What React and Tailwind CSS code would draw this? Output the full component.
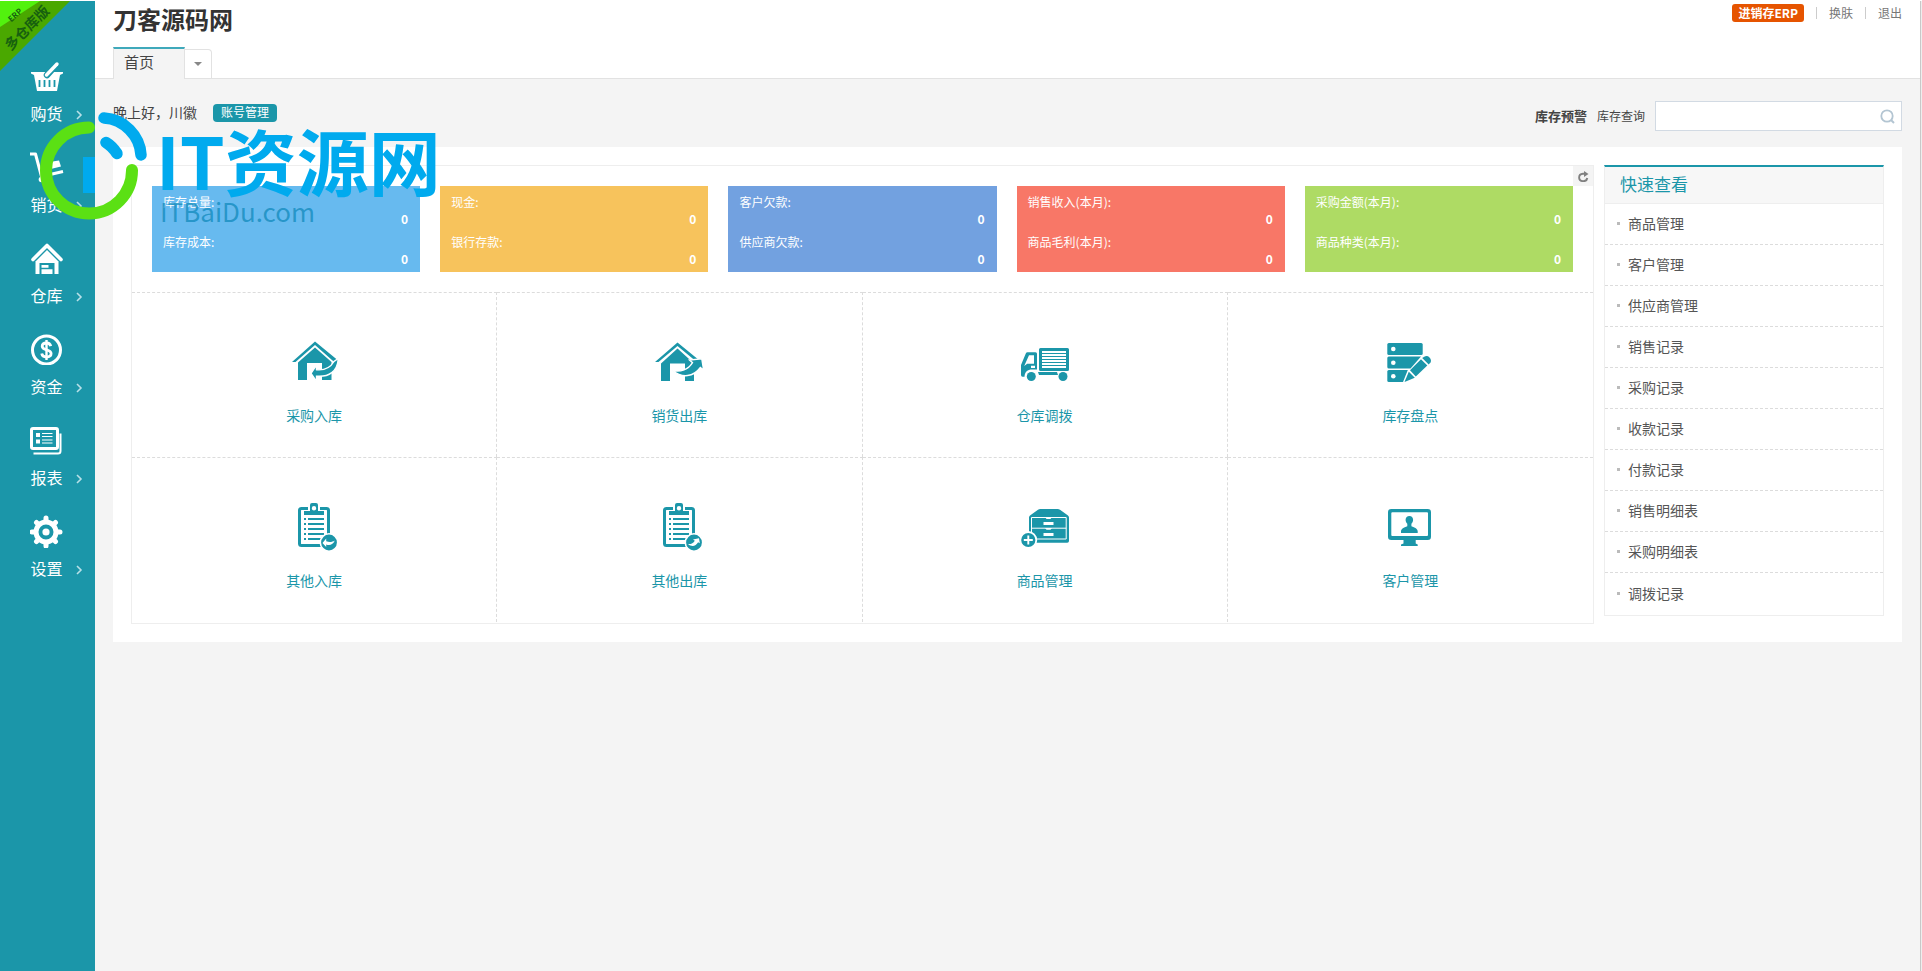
import React from "react";

const TEAL = "#1b96a9";

/* ---------- sidebar icons ---------- */

const BasketIcon = () => (
  <svg width="34" height="32" viewBox="0 0 34 32" aria-hidden="true">
    <path d="M1 12h32v1.500l-3 1.500-3 16H7L4 15l-3-1.500z" fill="#fff" />
    <path d="M9.500 20v7M14.500 20v7M19.500 20v7M24.500 20v7" stroke={TEAL} strokeWidth="1.800" />
    <path d="M27 4 17 15" stroke={TEAL} strokeWidth="6.500" strokeLinecap="round" />
    <path d="M27 4 16.500 15" stroke="#fff" strokeWidth="3.400" strokeLinecap="round" />
  </svg>
);

const CartIcon = () => (
  <svg width="34" height="32" viewBox="0 0 34 32" aria-hidden="true" fill="none" stroke="#fff">
    <path d="M0 3h5.500l6 22.500L33 20.500" strokeWidth="3" strokeLinejoin="round" />
    <path d="M12.500 12 29 9.500l2 6-16.500 4z" fill="#fff" stroke="none" />
    <circle cx="11.500" cy="28.500" r="2.800" fill="#fff" stroke="none" />
  </svg>
);

const StoreIcon = () => (
  <svg width="34" height="32" viewBox="0 0 34 32" aria-hidden="true">
    <path d="M3 17.500 17 3.500l14 14" fill="none" stroke="#fff" strokeWidth="3.600" strokeLinecap="round" strokeLinejoin="round" />
    <path d="M5.500 19.500 17 8l11.500 11.500V32h-23z" fill="#fff" />
    <path d="M9.500 21h15v11h-15z" fill={TEAL} />
    <path d="M11.500 23h7v2.800h-7zM11.500 27.200h11V32h-11z" fill="#fff" />
  </svg>
);

const MoneyIcon = () => (
  <svg width="34" height="32" viewBox="0 0 34 32" aria-hidden="true" fill="none" stroke="#fff">
    <circle cx="16.500" cy="17" r="14" strokeWidth="3" />
    <path d="M20.800 13.200c-.5-2-2.200-3.200-4.400-3.200-2.500 0-4.200 1.300-4.200 3.300 0 4.700 8.900 2.300 8.900 7.300 0 2.100-2 3.400-4.700 3.400-2.500 0-4.300-1.300-4.700-3.500" strokeWidth="2.800" />
    <path d="M16.500 7v20" strokeWidth="2.400" />
  </svg>
);

const ReportIcon = () => (
  <svg width="34" height="32" viewBox="0 0 34 32" aria-hidden="true" fill="none" stroke="#fff">
    <rect x="1.500" y="4.500" width="26" height="20" rx="1.500" strokeWidth="3" />
    <path d="M3.500 29.500h24.500c1.500 0 2.500-1 2.500-2.500V9.500" strokeWidth="2" />
    <path d="M6 9h4v4H6zM6 15.500h4v4H6z" fill="#fff" stroke="none" />
    <path d="M12 9.500h10.500M12 12.500h10.500M12 16h10.500M12 19h10.500" strokeWidth="1.200" />
  </svg>
);

const GearIcon = () => (
  <svg width="34" height="34" viewBox="0 0 34 34" aria-hidden="true" fill="none" stroke="#fff">
    <circle cx="16" cy="18" r="10" strokeWidth="5" />
    <path
      d="M16 6V4M16 32v-2M4 18H2M30 18h-2M7.500 9.500 6.500 8.500M25.500 27.500l-1-1M24.500 9.500l1-1M6.500 27.500l1-1"
      strokeWidth="5"
      strokeLinecap="round"
    />
    <circle cx="16" cy="18" r="3.600" fill="#fff" stroke="none" />
  </svg>
);

/* ---------- tile icons ---------- */

const Tile = ({ children }) => (
  <svg width="48" height="48" viewBox="0 0 48 48" aria-hidden="true" fill={TEAL}>
    {children}
  </svg>
);

const StockInIcon = () => (
  <Tile>
    <path d="M2 24h3.500L25 7 42.500 22.500l2 1L47.500 22 25 3.500z" />
    <path d="M8 24.500 25 9.500l16.500 14.500V42H32V25H17v17H8z" />
    <path
      d="M21 35.300 26.500 27v4.700c8 .8 14-2.200 17.500-8.200l4.300-3C47.500 33.500 39 39.200 26.500 38.200v5.300z"
      stroke="#fff"
      strokeWidth="1.400"
    />
  </Tile>
);

const StockOutIcon = () => (
  <Tile>
    <path d="M0 24h3.500L22.500 8 40 22.500h4.500L22.500 4.500z" />
    <path d="M6 25.500 22.500 10.500 39 25.500V43h-9V25.500H15V43H6z" />
    <path
      d="M17.500 32.500c8 2 16-1 20-7.800l-3-2.700 12.300-1.200 1.900 11.600-3.300-2.900c-7 9.500-18 11-27.900 3z"
      stroke="#fff"
      strokeWidth="1.400"
    />
  </Tile>
);

const TruckIcon = () => (
  <Tile>
    <path fillRule="evenodd" d="M19.500 10h27q1.500 0 1.500 1.500v20q0 1.500-1.500 1.500h-27q-1.500 0-1.500-1.500v-20Q18 10 19.500 10zM21 13v17h24V13z" />
    <path d="M21 15.500h24M21 18.500h24M21 21.500h24M21 24.500h24M21 27.500h24" stroke={TEAL} strokeWidth="1" />
    <path
      fillRule="evenodd"
      d="M0 27 4.800 15.500Q5.300 14.300 6.500 14.300H14.500Q16 14.300 16 15.800V31.500H11C6.500 31.500 3.800 34 3.500 38.700H1.500Q0 38.500 0 37zM8 17.300 3.200 28l3-2.300H13v-8.400zM10 27.700V30h4v-2.300z"
    />
    <path d="M17 34h19l1 3H18z" />
    <circle cx="10.300" cy="38.500" r="4.500" />
    <circle cx="42" cy="38.500" r="4.500" />
  </Tile>
);

const StocktakeIcon = () => (
  <Tile>
    <rect x="1.300" y="5" width="35.400" height="12" rx="1.500" />
    <path d="M2.800 18.500H35L24.500 30.500H2.800q-1.500 0-1.500-1.500v-9q0-1.500 1.500-1.500z" />
    <path d="M2.800 32h19L17 44H2.800q-1.500 0-1.500-1.500v-9Q1.300 32 2.800 32z" />
    <g fill="#fff">
      <circle cx="7.300" cy="11" r="2.300" />
      <circle cx="7.300" cy="24.700" r="2.300" />
      <circle cx="7.300" cy="38.200" r="2.300" />
    </g>
    <path d="m24 32.300 11-11 6.300 6.300-11.500 11z" />
    <path d="m22.800 33.700 6 6L18.500 44z" />
    <path d="m36.200 20 2-1.300q3-1.500 5.300.8t1 5l-1.800 2z" />
  </Tile>
);

const Clipboard = ({ children }) => (
  <Tile>
    <rect x="9.500" y="5.500" width="29" height="37" rx="2" fill="none" stroke={TEAL} strokeWidth="3" />
    <path d="M18 3h12v5H18z" fill="#fff" />
    <path fillRule="evenodd" d="M22 0h4q2 0 2 2v6h6v4H14V8h6V2q0-2 2-2zM24 3a2.200 2.200 0 1 0 0 4.400A2.200 2.200 0 0 0 24 3z" />
    <path d="M14 16h2M18 16h16M14 21h2M18 21h16M14 26h2M18 26h16M14 31h2M18 31h16M14 36h2M18 36h16" stroke={TEAL} strokeWidth="2" />
    <circle cx="39" cy="39.500" r="8.700" stroke="#fff" strokeWidth="1.600" />
    {children}
  </Tile>
);

const OtherInIcon = () => (
  <Clipboard>
    <path d="m32.500 40 3.700-4.500v2.700c3 1.300 6 1 8.600-.7-1.600 4-5 5.300-8.600 3.900V44z" fill="#fff" />
  </Clipboard>
);

const OtherOutIcon = () => (
  <Clipboard>
    <path d="M33 41c3.200.2 5.300-.7 6.800-3.300L38 36.500l6-1.300.8 5-1.700-.9c-2.300 4-6.300 5-10.100 1.700z" fill="#fff" />
  </Clipboard>
);

const GoodsIcon = () => (
  <Tile>
    <path d="M8 14.500q0-1.200 1-2l8-5.700Q18 6 19.300 6h17.400q1.300 0 2.300.8l8 5.700q1 .8 1 2V38q0 1.800-1.800 1.800H9.800Q8 39.800 8 38z" />
    <path d="M10.500 14.500h34.700V36H10.500zM10.500 25.200h34.700" fill="none" stroke="#fff" strokeWidth="1" />
    <path d="M22.500 19h10v3h-10zM22.500 30h10v3h-10zM24 14h7l-1.500 2h-4zM24 25h7l-1.500 1.800h-4z" fill="#fff" />
    <circle cx="7.300" cy="37" r="8" stroke="#fff" strokeWidth="1.800" />
    <path d="M7.300 32.500v9M2.800 37h9" stroke="#fff" strokeWidth="1.900" />
  </Tile>
);

const CustomerIcon = () => (
  <Tile>
    <path
      fillRule="evenodd"
      d="M5.300 6h36.400Q45 6 45 9.300v24.400Q45 37 41.700 37H5.300Q2 37 2 33.700V9.300Q2 6 5.300 6zM6.300 9.300q-1 0-1 1V32q0 1 1 1h34.700q1 0 1-1V10.300q0-1-1-1z"
    />
    <path d="M17.500 37h12.200v3.500l2 1V43H15v-1.500l2.500-1z" />
    <path d="M23.400 13c2.200 0 3.700 1.500 3.700 3.700 0 1.600-.8 3-1.700 4v2.600c3.500 1.200 6.300 2.700 6.300 5V30H15v-1.700c0-2.300 2.800-3.800 6.300-5v-2.600c-1-1-1.700-2.400-1.700-4 0-2.200 1.600-3.700 3.800-3.700z" />
  </Tile>
);

/* ---------- data ---------- */

const NAV = [
  { label: "购货", Icon: BasketIcon },
  { label: "销货", Icon: CartIcon },
  { label: "仓库", Icon: StoreIcon },
  { label: "资金", Icon: MoneyIcon },
  { label: "报表", Icon: ReportIcon },
  { label: "设置", Icon: GearIcon },
];

const CARDS = [
  { bg: "bg-[#67baef]", rows: ["库存总量:", "库存成本:"] },
  { bg: "bg-[#f7c35c]", rows: ["现金:", "银行存款:"] },
  { bg: "bg-[#72a1e0]", rows: ["客户欠款:", "供应商欠款:"] },
  { bg: "bg-[#f87767]", rows: ["销售收入(本月):", "商品毛利(本月):"] },
  { bg: "bg-[#aedb64]", rows: ["采购金额(本月):", "商品种类(本月):"] },
];

const TILES = [
  { label: "采购入库", Icon: StockInIcon },
  { label: "销货出库", Icon: StockOutIcon },
  { label: "仓库调拨", Icon: TruckIcon },
  { label: "库存盘点", Icon: StocktakeIcon },
  { label: "其他入库", Icon: OtherInIcon },
  { label: "其他出库", Icon: OtherOutIcon },
  { label: "商品管理", Icon: GoodsIcon },
  { label: "客户管理", Icon: CustomerIcon },
];

const QUICK = [
  "商品管理",
  "客户管理",
  "供应商管理",
  "销售记录",
  "采购记录",
  "收款记录",
  "付款记录",
  "销售明细表",
  "采购明细表",
  "调拨记录",
];

/* ---------- sections ---------- */

function Ribbon() {
  return (
    <div className="absolute left-0 top-0">
      <svg width="71" height="71" viewBox="0 0 71 71" role="img" aria-label="ERP 多仓库版">
        <path d="M0 0h70L0 70z" fill="#4aa800" />
        <path d="M0 0h40L0 26z" fill="#52f20e" />
        <g fill="#17600f" fontFamily="'Noto Sans CJK SC', sans-serif" fontWeight="bold" textAnchor="middle">
          <text x="15" y="17" fontSize="8" transform="rotate(-42 15 14)">ERP</text>
          <text x="27" y="32" fontSize="14" transform="rotate(-45 27 27)">多仓库版</text>
        </g>
      </svg>
    </div>
  );
}

function Sidebar() {
  return (
    <nav className="relative w-[95px] shrink-0 bg-[#1b96a9] pt-[59px]" aria-label="主菜单">
      <Ribbon />
      <ul className="pr-0.5">
        {NAV.map(({ label, Icon }) => (
          <li key={label} className="h-[91px]">
            <a href="#" className="flex flex-col items-center text-white">
              <span className="flex h-8 items-center">
                <Icon />
              </span>
              <span className="mt-[9px] grid w-full grid-cols-[1fr_auto_1fr] items-center">
                <span />
                <span className="text-base leading-6">{label}</span>
                <svg className="ml-3 mt-1" width="8" height="10" viewBox="0 0 8 10" fill="none" aria-hidden="true">
                  <path d="m2 1 4 4-4 4" stroke="#b8e0e8" strokeWidth="1.600" />
                </svg>
              </span>
            </a>
          </li>
        ))}
      </ul>
    </nav>
  );
}

function Header() {
  return (
    <header className="flex items-stretch justify-between border-b border-[#e2e2e2] bg-white pl-[18px] pr-[18px]">
      <div>
        <h1 className="mb-2.5 text-2xl font-bold leading-9 text-[#333]">刀客源码网</h1>
        <div className="-mb-px flex items-end">
          <button className="h-8 w-[72px] border-x border-t-2 border-x-[#e2e2e2] border-t-[#3fa9bb] bg-[#f4f4f4] pb-1 pl-2.5 text-left text-[15px] leading-6 text-[#444]">
            首页
          </button>
          <button
            aria-label="标签列表"
            className="flex h-[30px] w-[27px] items-center justify-center rounded-tr border border-l-0 border-[#e2e2e2] bg-white"
          >
            <svg width="8" height="4" viewBox="0 0 8 4" aria-hidden="true">
              <path d="M0 0h8L4 4z" fill="#888" />
            </svg>
          </button>
        </div>
      </div>
      <div className="mt-[3px] flex h-[18px] items-center text-xs text-[#777]">
        <a href="#" className="rounded-[3px] bg-[#e65400] px-1.5 font-bold leading-[18px] text-white">
          进销存ERP
        </a>
        <span className="ml-3 h-3 w-px bg-[#ccc]" />
        <a href="#" className="mx-3">换肤</a>
        <span className="h-3 w-px bg-[#ccc]" />
        <a href="#" className="ml-3">退出</a>
      </div>
    </header>
  );
}

function Toolbar() {
  return (
    <div className="flex h-[30px] items-center justify-between">
      <div className="mb-2 flex items-center">
        <span className="text-sm text-[#444]">晚上好，川徽</span>
        <a href="#" className="ml-4 mt-0.5 rounded-sm bg-[#1b96a9] px-2 pb-0.5 text-xs leading-4 text-white">
          账号管理
        </a>
      </div>
      <form className="flex items-center text-xs text-[#444]">
        <a href="#" className="mr-2.5 text-[13px] font-bold">库存预警</a>
        <label htmlFor="stock-search" className="mr-2.5">库存查询</label>
        <span className="flex h-[30px] w-[247px] items-center border border-[#d2dae3] bg-white pr-1.5">
          <input id="stock-search" type="text" className="h-full min-w-0 flex-1 px-2 outline-none" />
          <button type="button" aria-label="查询">
            <svg width="15" height="15" viewBox="0 0 15 15" fill="none" stroke="#b3c5d2" aria-hidden="true">
              <circle cx="7" cy="7" r="5.700" strokeWidth="1.800" />
              <path d="m11 11 3 3" strokeWidth="2" />
            </svg>
          </button>
        </span>
      </form>
    </div>
  );
}

function Summary() {
  return (
    <div className="relative grid grid-cols-5 gap-5 p-5">
      {CARDS.map(({ bg, rows }) => (
        <dl key={rows[0]} className={`${bg} flex flex-col gap-1.5 pb-[5px] pl-[11px] pr-3 pt-[7px] text-xs text-white`}>
          {rows.map((label) => (
            <div key={label}>
              <dt className="leading-[18px]">{label}</dt>
              <dd className="text-right font-bold leading-4">0</dd>
            </div>
          ))}
        </dl>
      ))}
      <button aria-label="刷新" className="absolute right-0 top-0 flex size-5 items-center justify-center bg-[#f4f4f4]">
        <svg width="11" height="11" viewBox="0 0 11 11" aria-hidden="true">
          <path d="M9.300 7A4.100 3.700 0 1 1 5 2.800h2" fill="none" stroke="#808080" strokeWidth="1.900" />
          <path d="M6 0 10.500 2.900 6 5.900z" fill="#808080" />
        </svg>
      </button>
    </div>
  );
}

function Tiles() {
  return (
    <ul className="grid grid-cols-4">
      {TILES.map(({ label, Icon }) => (
        <li
          key={label}
          className="border-r border-t border-dashed border-[#dcdcdc] pb-8 nth-[4n]:border-r-0"
        >
          <a href="#" className="flex flex-col items-center pt-[45px] text-sm leading-5 text-[#1b96a9]">
            <Icon />
            <span className="mt-[19px]">{label}</span>
          </a>
        </li>
      ))}
    </ul>
  );
}

function QuickView() {
  return (
    <aside className="w-[280px] shrink-0 border border-t-2 border-[#eee] border-t-[#1b96a9]">
      <h2 className="border-b border-[#eee] bg-[#f7f7f7] px-[15px] pb-0.5 text-[17px] leading-[34px] text-[#1b96a9]">快速查看</h2>
      <ul>
        {QUICK.map((label) => (
          <li key={label} className="border-b border-dashed border-[#dcdcdc] pb-0.5 last:border-b-0 last:pb-[3px] last:pt-px">
            <a href="#" className="flex items-center pl-3 text-sm leading-[38px] text-[#555]">
              <span className="mr-2 size-[3px] bg-[#bbb]" />
              {label}
            </a>
          </li>
        ))}
      </ul>
    </aside>
  );
}

function Watermark() {
  return (
    <div className="pointer-events-none absolute left-10 top-[109px] flex items-start">
      <svg width="110" height="112" viewBox="0 0 110 112" fill="none" strokeLinecap="round" aria-hidden="true">
        <path d="M49 17.500A43 43 0 1 0 92 60" stroke="#5be014" strokeWidth="12" />
        <path d="M64 8c20 1 36 18 37 37" stroke="#00aaee" strokeWidth="11.500" />
        <path d="M66 32.500q6 3.500 11 11" stroke="#00aaee" strokeWidth="11.500" />
        <path d="M43 47h12v36H43z" fill="#00aaee" />
      </svg>
      <div className="ml-1.5 mt-2.5 font-bold">
        <div className="text-[72px] leading-[78px] text-[#00aaee]">IT资源网</div>
        <div className="pl-1 text-[26px] font-normal leading-[26px] text-[#0a86b8]/70">ITBaiDu.com</div>
      </div>
    </div>
  );
}

export default function App() {
  return (
    <div className="relative flex min-h-screen border-t border-white bg-[#f4f4f4] font-['Noto_Sans_CJK_SC','Noto_Sans',sans-serif]">
      <Sidebar />
      <div className="min-w-0 flex-1">
        <Header />
        <main className="px-[18px] pt-[22px]">
          <Toolbar />
          <div className="mt-4 flex items-start gap-2.5 bg-white p-[18px]">
            <section className="min-w-0 flex-1 border border-[#eee] pb-px">
              <Summary />
              <Tiles />
            </section>
            <QuickView />
          </div>
        </main>
      </div>
      <div className="w-0.5 shrink-0 border-l border-[#c8c8c8] bg-[#eee]" />
      <Watermark />
    </div>
  );
}
